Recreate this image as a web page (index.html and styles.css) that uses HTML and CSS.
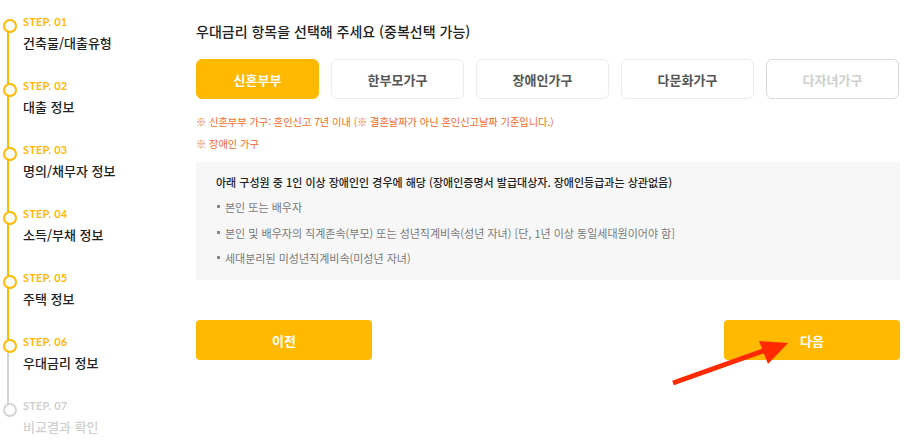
FILE: index.html
```html
<!DOCTYPE html>
<html lang="ko">
<head>
<meta charset="utf-8">
<link rel="stylesheet" href="styles.css">
</head>
<body>
<div class="page">
  <aside class="steps">
    <div class="step done"><div class="step-no">STEP. 01</div><div class="step-title">건축물/대출유형</div></div>
    <div class="step done"><div class="step-no">STEP. 02</div><div class="step-title">대출 정보</div></div>
    <div class="step done"><div class="step-no">STEP. 03</div><div class="step-title">명의/채무자 정보</div></div>
    <div class="step done"><div class="step-no">STEP. 04</div><div class="step-title">소득/부채 정보</div></div>
    <div class="step done"><div class="step-no">STEP. 05</div><div class="step-title">주택 정보</div></div>
    <div class="step current"><div class="step-no">STEP. 06</div><div class="step-title">우대금리 정보</div></div>
    <div class="step todo"><div class="step-no">STEP. 07</div><div class="step-title">비교결과 확인</div></div>
  </aside>
  <main class="content">
    <h2 class="heading">우대금리 항목을 선택해 주세요 (중복선택 가능)</h2>
    <div class="options">
      <button class="opt selected">신혼부부</button>
      <button class="opt">한부모가구</button>
      <button class="opt">장애인가구</button>
      <button class="opt">다문화가구</button>
      <button class="opt disabled">다자녀가구</button>
    </div>
    <p class="note first">※ 신혼부부 가구: 혼인신고 7년 이내 (※ 결혼날짜가 아닌 혼인신고날짜 기준입니다.)</p>
    <p class="note">※ 장애인 가구</p>
    <div class="info">
      <p class="info-title">아래 구성원 중 1인 이상 장애인인 경우에 해당 (장애인증명서 발급대상자. 장애인등급과는 상관없음)</p>
      <ul class="info-list">
        <li>본인 또는 배우자</li>
        <li>본인 및 배우자의 직계존속(부모) 또는 성년직계비속(성년 자녀) [단, 1년 이상 동일세대원이어야 함]</li>
        <li>세대분리된 미성년직계비속(미성년 자녀)</li>
      </ul>
    </div>
    <div class="nav">
      <button class="nav-btn">이전</button>
      <button class="nav-btn">다음</button>
    </div>
  </main>
</div>
<svg class="arrow" width="140" height="60" viewBox="0 0 140 60">
  <line x1="12" y1="49" x2="105" y2="16" stroke="#ff2a00" stroke-width="5"/>
  <polygon points="127,9 98,7 107,30" fill="#ff2a00"/>
</svg>
</body>
</html>
```
FILE: styles.css
```css
* { box-sizing: border-box; }
body {
  margin: 0;
  background: #fff;
  font-family: "Noto Sans CJK KR", "Noto Sans", sans-serif;
  color: #222;
}
.page {
  display: flex;
  width: 915px;
  height: 448px;
  position: relative;
}
.steps {
  width: 196px;
  flex: none;
  padding-top: 15px;
}
.step {
  position: relative;
  height: 64px;
  padding-left: 23px;
}
.step::before {
  content: "";
  position: absolute;
  left: 3px;
  top: 4px;
  width: 10px;
  height: 10px;
  border-radius: 50%;
  border: 2px solid #ffb900;
  background: #fff;
  z-index: 2;
}
.step::after {
  content: "";
  position: absolute;
  left: 7px;
  top: 9px;
  width: 2px;
  height: 64px;
  background: #ffb900;
  z-index: 1;
}
.step.current::after { background: #d4d4d4; }
.step.todo::before { border-color: #d4d4d4; }
.step.todo::after { display: none; }
.step-no {
  font-family: "Lato", "Noto Sans", sans-serif;
  font-weight: 700;
  font-size: 11px;
  line-height: 14px;
  color: #ffb900;
  letter-spacing: 0.2px;
}
.step-title {
  margin-top: 5px;
  font-size: 13px;
  line-height: 18px;
  font-weight: 500;
  color: #222;
}
.todo .step-no, .todo .step-title { color: #cfcfcf; }

.content {
  width: 704px;
  padding-top: 21px;
}
.heading {
  margin: 0;
  font-size: 14px;
  line-height: 20px;
  font-weight: 500;
  color: #222;
}
.options {
  display: grid;
  grid-template-columns: 123px repeat(4, 133px);
  gap: 12px;
  margin-top: 18px;
}
.opt {
  height: 40px;
  border: 1px solid #ececec;
  border-radius: 6px;
  background: #fff;
  font-family: inherit;
  font-size: 13px;
  font-weight: 700;
  color: #555;
  padding: 0;
}
.opt.selected {
  background: #ffb900;
  border-color: #ffb900;
  color: #fff;
}
.opt.disabled {
  border-color: #d9d9d9;
  color: #cfcfcf;
}
.note {
  margin: 0;
  font-size: 10.2px;
  line-height: 16px;
  color: #f36a1d;
  height: 21px;
}
.note.first { margin-top: 15px; height: 22px; }
.info {
  margin-top: 5px;
  height: 118px;
  background: #f7f7f7;
  padding: 11px 20px 0;
}
.info-title {
  margin: 0;
  font-size: 11px;
  line-height: 18px;
  font-weight: 500;
  color: #222;
}
.info-list {
  list-style: none;
  margin: 7px 0 0;
  padding: 0;
}
.info-list li {
  position: relative;
  padding-left: 9px;
  font-size: 11px;
  line-height: 18px;
  color: #777;
  height: 25.5px;
}
.info-list li::before {
  content: "";
  position: absolute;
  left: 1px;
  top: 7px;
  width: 3px;
  height: 3px;
  background: #888;
}
.nav {
  display: flex;
  justify-content: space-between;
  margin-top: 40px;
}
.nav-btn {
  width: 176px;
  height: 40px;
  border: none;
  border-radius: 4px;
  background: #ffb900;
  color: #fff;
  font-family: inherit;
  font-size: 13px;
  font-weight: 700;
  padding: 0;
}
.arrow {
  position: absolute;
  left: 661px;
  top: 334px;
}
```
